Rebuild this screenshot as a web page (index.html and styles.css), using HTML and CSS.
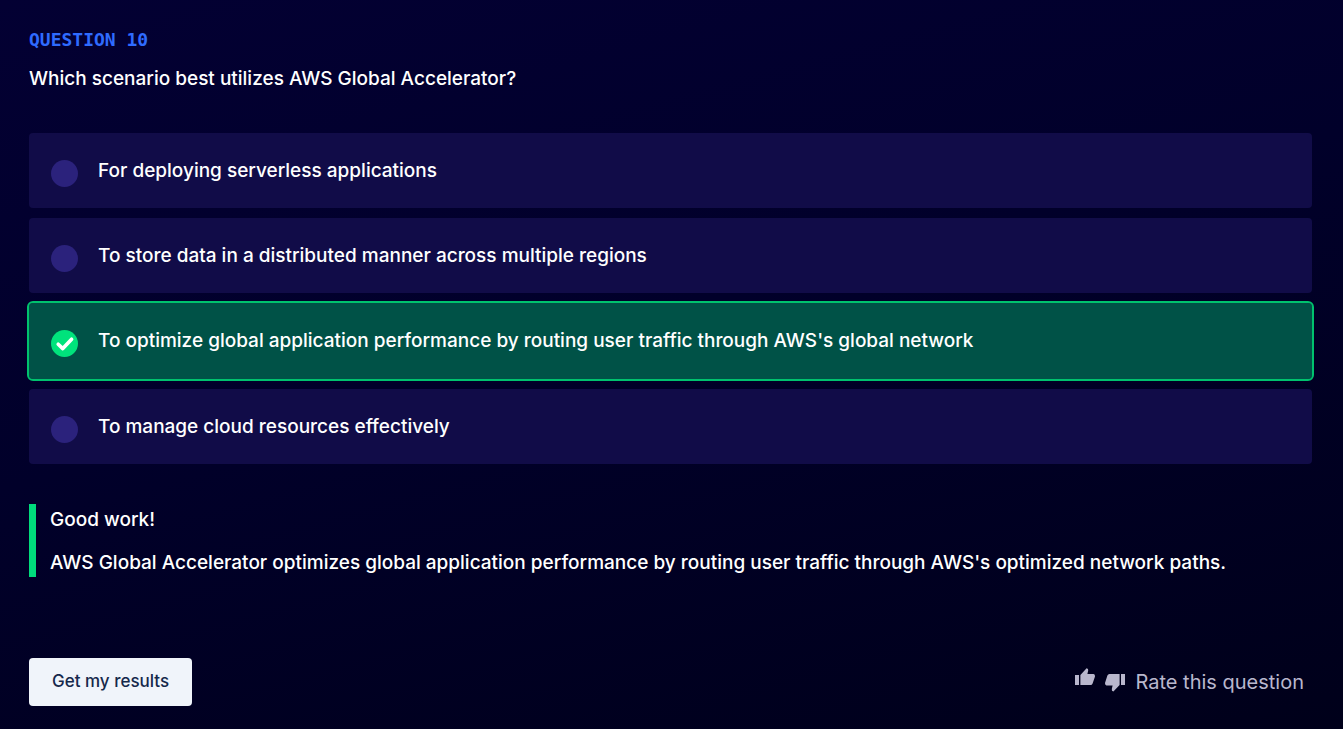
FILE: index.html
```html
<!DOCTYPE html>
<html lang="en">
<head>
<meta charset="utf-8">
<meta name="viewport" content="width=device-width, initial-scale=1">
<title>Question 10</title>
<link rel="stylesheet" href="styles.css">
</head>
<body>
<main class="quiz">
  <header class="question">
    <p class="question-number">QUESTION 10</p>
    <h1 class="question-text" id="question">Which scenario best utilizes AWS Global Accelerator?</h1>
  </header>

  <div class="answers" role="radiogroup" aria-labelledby="question">
    <label class="answer">
      <span class="marker"><input class="radio" type="radio" name="answer"></span>
      <span class="answer-text">For deploying serverless applications</span>
    </label>
    <label class="answer">
      <span class="marker"><input class="radio" type="radio" name="answer"></span>
      <span class="answer-text">To store data in a distributed manner across multiple regions</span>
    </label>
    <label class="answer answer-correct">
      <span class="marker">
        <input class="radio" type="radio" name="answer" checked>
        <svg class="check" viewBox="0 0 27 27" aria-hidden="true"><path d="M7.2 14.2 11.8 18.6 20.6 9.2"/></svg>
      </span>
      <span class="answer-text">To optimize global application performance by routing user traffic through AWS's global network</span>
    </label>
    <label class="answer">
      <span class="marker"><input class="radio" type="radio" name="answer"></span>
      <span class="answer-text">To manage cloud resources effectively</span>
    </label>
  </div>

  <section class="feedback">
    <p>Good work!</p>
    <p>AWS Global Accelerator optimizes global application performance by routing user traffic through AWS's optimized network paths.</p>
  </section>

  <footer class="actions">
    <button class="results" type="button">Get my results</button>
    <div class="rating">
      <button class="thumb thumb-up" type="button" aria-label="Thumbs up">
        <svg viewBox="0 0 20 18" aria-hidden="true"><path d="M0 7H4V17H0ZM5.4 17V7L11.6 0.3Q13.6 0.6 13.2 2.6L12.4 6H18.6Q20.2 6.4 20 8.4L17.6 15.4Q17 17 15.6 17Z"/></svg>
      </button>
      <button class="thumb thumb-down" type="button" aria-label="Thumbs down">
        <svg viewBox="0 0 20 18" aria-hidden="true"><path d="M20 12H16V1H20ZM14.6 1V12L8.4 18.6Q6.4 18 6.8 16L7.6 12.4H1.4Q-.2 12 0 10L2.4 2.6Q3 1 4.4 1Z"/></svg>
      </button>
      <span>Rate this question</span>
    </div>
  </footer>
</main>
</body>
</html>
```
FILE: styles.css
```css
* {
  box-sizing: border-box;
}

body {
  margin: 0;
  min-height: 100vh;
  background: linear-gradient(165deg, #030033 0%, #01002a 45%, #00001a 100%);
  color: #fff;
  font-family: Inter, "Liberation Sans", sans-serif;
  font-size: 19px;
  font-weight: 500;
  line-height: 27px;
}

p,
h1 {
  margin: 0;
}

.quiz {
  padding: 28px 31px 23px 29px;
}

.question-number {
  color: #2f6bff;
  font-family: "DejaVu Sans Mono", monospace;
  font-size: 18px;
  font-weight: 700;
  line-height: 24px;
}

.question-text {
  margin-top: 13px;
  font-size: 19px;
  font-weight: 500;
}

.answers {
  display: grid;
  gap: 10px;
  margin-top: 41px;
}

.answer {
  display: flex;
  gap: 20px;
  padding: 24px 22px;
  border-radius: 4px;
  background: #110c48;
  cursor: pointer;
}

.marker {
  display: grid;
  flex: none;
  padding-top: 3px;
  height: 27px;
}

.radio,
.check {
  grid-area: 1 / 1;
  width: 27px;
  height: 27px;
  margin: 0;
}

.radio {
  appearance: none;
  border-radius: 50%;
  background: #2b227c;
}

.radio:checked {
  background: #00e37c;
}

.check {
  fill: none;
  stroke: #fff;
  stroke-width: 3.6;
  stroke-linecap: round;
  stroke-linejoin: round;
  pointer-events: none;
}

.answer-correct {
  padding-bottom: 25px;
  background: #005247;
  outline: 2px solid #00c26e;
}

.feedback {
  display: grid;
  gap: 16px;
  margin-top: 40px;
  padding: 2px 0 1px 14px;
  border-left: 7px solid #00dc7c;
}

.actions {
  display: flex;
  align-items: center;
  justify-content: space-between;
  margin-top: 81px;
}

.results {
  padding: 12px 23px 14px;
  border: 0;
  border-radius: 4px;
  background: #f0f4fa;
  color: #15284b;
  font: 500 17px/22px Inter, "Liberation Sans", sans-serif;
  cursor: pointer;
}

.rating {
  display: flex;
  align-items: center;
  gap: 10px;
  padding-right: 8px;
  color: #b9b7cd;
  font-size: 20px;
  font-weight: 400;
}

.thumb {
  padding: 0;
  border: 0;
  background: none;
  cursor: pointer;
}

.thumb svg {
  display: block;
  width: 20px;
  height: 18px;
  overflow: visible;
  fill: #b9b7cd;
}

.thumb-up {
  padding-bottom: 10px;
}
```
